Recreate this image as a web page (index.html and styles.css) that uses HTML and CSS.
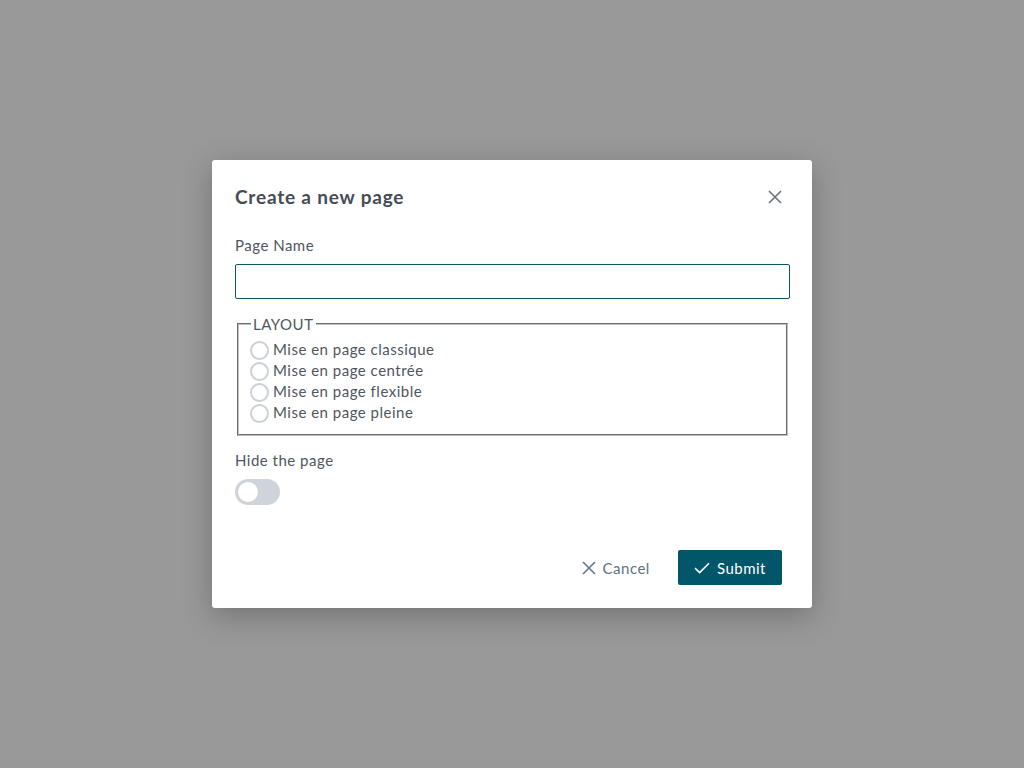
FILE: index.html
```html
<!DOCTYPE html>
<html lang="en">
<head>
<meta charset="utf-8">
<title>Create a new page</title>
<link rel="stylesheet" href="styles.css">
</head>
<body>
<div class="backdrop">
  <div class="dialog" role="dialog">
    <div class="dialog-header">
      <h2 class="dialog-title">Create a new page</h2>
      <button class="close-btn" aria-label="Close">
        <svg width="14" height="14" viewBox="0 0 14 14"><path d="M1 1L13 13M13 1L1 13" stroke="#6b737c" stroke-width="1.6" fill="none"/></svg>
      </button>
    </div>
    <div class="dialog-body">
      <label class="field-label" for="pname">Page Name</label>
      <input class="text-input" id="pname" type="text">
      <fieldset class="layout-set">
        <legend>LAYOUT</legend>
        <label class="radio-row"><input type="radio" name="layout"><span>Mise en page classique</span></label>
        <label class="radio-row"><input type="radio" name="layout"><span>Mise en page centrée</span></label>
        <label class="radio-row"><input type="radio" name="layout"><span>Mise en page flexible</span></label>
        <label class="radio-row"><input type="radio" name="layout"><span>Mise en page pleine</span></label>
      </fieldset>
      <div class="field-label hide-label">Hide the page</div>
      <div class="toggle"><span class="knob"></span></div>
    </div>
    <div class="dialog-footer">
      <button class="btn-cancel">
        <svg width="14" height="14" viewBox="0 0 14 14"><path d="M1 1L13 13M13 1L1 13" stroke="#5d7283" stroke-width="1.5" fill="none"/></svg>
        <span>Cancel</span>
      </button>
      <button class="btn-submit">
        <svg width="16" height="12" viewBox="0 0 16 12"><path d="M1 6.2L5.6 10.6L15 1.2" stroke="#ffffff" stroke-width="1.6" fill="none"/></svg>
        <span>Submit</span>
      </button>
    </div>
  </div>
</div>
</body>
</html>
```

FILE: styles.css
```css
html, body {
  margin: 0;
  padding: 0;
  height: 100%;
}
body {
  font-family: Lato, "Open Sans", sans-serif;
  color: #4f555d;
  letter-spacing: 0.5px;
}
.backdrop {
  width: 1024px;
  height: 768px;
  background: #999999;
  display: flex;
  justify-content: center;
  padding-top: 160px;
  box-sizing: border-box;
}
.dialog {
  width: 600px;
  height: 448px;
  background: #ffffff;
  border-radius: 3px;
  box-shadow: 0 8px 30px rgba(0, 0, 0, 0.25);
  display: flex;
  flex-direction: column;
  box-sizing: border-box;
}
.dialog-header {
  display: flex;
  align-items: center;
  justify-content: space-between;
  padding: 22px 22px 0 23px;
}
.dialog-title {
  margin: 0;
  font-size: 19px;
  line-height: 26px;
  font-weight: 700;
  color: #464c55;
  letter-spacing: 0.8px;
}
.close-btn {
  width: 30px;
  height: 30px;
  border: 0;
  background: none;
  padding: 0;
  display: flex;
  align-items: center;
  justify-content: center;
  cursor: pointer;
}
.dialog-body {
  padding: 23px 22px 0 23px;
  display: flex;
  flex-direction: column;
  align-items: flex-start;
}
.field-label {
  display: block;
  font-size: 15px;
  line-height: 20px;
  color: #50565e;
}
.text-input {
  margin-top: 9px;
  width: 555px;
  height: 35px;
  box-sizing: border-box;
  border: 1px solid #0b5566;
  border-radius: 2px;
  padding: 0 8px;
  font: inherit;
  outline: none;
}
.layout-set {
  margin: 15px 2px 0 2px;
  width: 551px;
  box-sizing: border-box;
  border: 2px groove #c0c0c0;
  padding: 5px 12px 11px 12px;
  font-size: 15px;
  color: #50565e;
}
.layout-set legend {
  padding: 0 2px;
  line-height: 20px;
}
.radio-row {
  display: flex;
  align-items: center;
  height: 21px;
  line-height: 21px;
}
.radio-row input {
  appearance: none;
  -webkit-appearance: none;
  width: 19px;
  height: 19px;
  margin: 1px 4px 0 -1px;
  border: 2px solid #ccd1d7;
  border-radius: 50%;
  box-sizing: border-box;
  background: #fff;
}
.hide-label {
  margin-top: 14px;
}
.toggle {
  margin-top: 9px;
  width: 45px;
  height: 26px;
  border-radius: 13px;
  background: #cfd4da;
  display: flex;
  align-items: center;
  padding-left: 3px;
  box-sizing: border-box;
}
.knob {
  width: 20px;
  height: 20px;
  border-radius: 50%;
  background: #ffffff;
}
.dialog-footer {
  margin-top: auto;
  padding: 0 30px 23px 0;
  display: flex;
  justify-content: flex-end;
  align-items: center;
  gap: 28px;
}
.btn-cancel {
  border: 0;
  background: none;
  padding: 0;
  display: flex;
  align-items: center;
  gap: 7px;
  font: inherit;
  font-size: 15px;
  letter-spacing: 0.5px;
  color: #5f7383;
  cursor: pointer;
  height: 35px;
}
.btn-submit {
  height: 35px;
  border: 0;
  border-radius: 2px;
  background: #02566a;
  color: #ffffff;
  display: flex;
  align-items: center;
  gap: 7px;
  padding: 0 16px;
  font: inherit;
  font-size: 15px;
  letter-spacing: 0.5px;
  cursor: pointer;
}
```
